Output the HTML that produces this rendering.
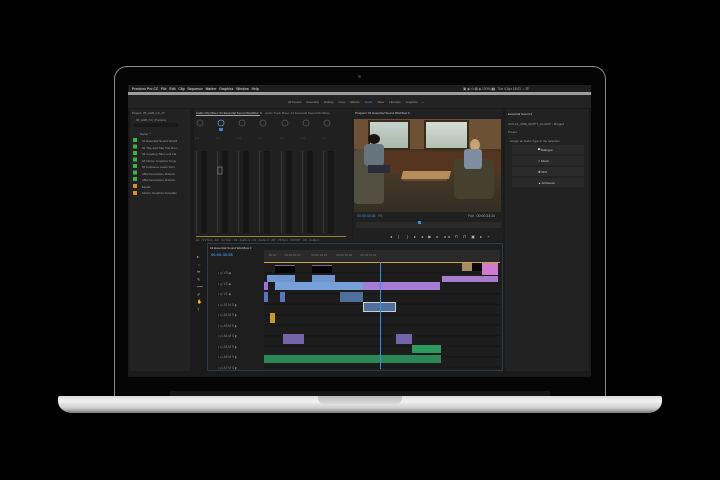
<!DOCTYPE html>
<html><head><meta charset="utf-8"><style>
*{margin:0;padding:0;box-sizing:border-box}
body{width:720px;height:480px;background:#000;position:relative;overflow:hidden;font-family:"Liberation Sans",sans-serif}
.a{position:absolute}
.t{position:absolute;font-size:3px;color:#9a9a9a;white-space:nowrap}
</style></head><body>
<!-- lid -->
<div class="a" style="left:114px;top:66px;width:492px;height:334px;border-radius:13px 13px 0 0;border:1.5px solid #8a8a8a;border-bottom:none;background:#050505"></div>
<div class="a" style="left:358px;top:75px;width:3px;height:3px;border-radius:50%;background:#333"></div>
<!-- screen -->
<div class="a" style="left:128px;top:85px;width:463px;height:292px;background:#1b1b1b;overflow:hidden">
 <div class="a" style="left:0;top:0;width:463px;height:7px;background:#1e1e1e"></div>
 <div class="t" style="left:4px;top:1.5px;color:#bbb;font-size:3.3px;font-weight:bold">  Premiere Pro CC &nbsp; File &nbsp; Edit &nbsp; Clip &nbsp; Sequence &nbsp; Marker &nbsp; Graphics &nbsp; Window &nbsp; Help</div>
 <div class="t" style="left:335px;top:1.5px;color:#aaa;font-size:3.3px">▣ ◉ ⊙ ▤ ◈ 100% ▮▮ &nbsp; Tue 4 Apr 18:01 &nbsp;⌕ ☰</div>
 <div class="a" style="left:0;top:7px;width:463px;height:3px;background:#9c9c9c"></div>
 <div class="a" style="left:0;top:10px;width:463px;height:13px;background:#232323"></div>
 <div class="t" style="left:160px;top:15px">All Panels &nbsp;&nbsp;&nbsp;&nbsp; Assembly &nbsp;&nbsp;&nbsp;&nbsp; Editing &nbsp;&nbsp;&nbsp;&nbsp; Color &nbsp;&nbsp;&nbsp;&nbsp; Effects &nbsp;&nbsp;&nbsp;&nbsp; <span style="color:#4a8fd8">Audio</span> &nbsp;&nbsp;&nbsp;&nbsp; Titles &nbsp;&nbsp;&nbsp;&nbsp; Libraries &nbsp;&nbsp;&nbsp;&nbsp; Graphics &nbsp;&nbsp;&nbsp; »</div>
 <!-- project panel -->
 <div class="a" style="left:2px;top:24px;width:60px;height:262px;background:#222"></div>
 <div class="t" style="left:4px;top:26px">Project: 05_AAB_CC_PI</div>
 <div class="t" style="left:8px;top:33px">05_AAB_CC_PI.prproj</div>
 <div class="a" style="left:6px;top:38px;width:44px;height:4px;background:#1a1a1a"></div>
 <div class="t" style="left:12px;top:47px">Name ⌃</div>
 <div class="a" style="left:5px;top:53px;width:4px;height:45px;background:repeating-linear-gradient(#3cb14a 0 4px,transparent 4px 6.5px)"></div>
 <div class="a" style="left:5px;top:99px;width:4px;height:4px;background:#e08a2c"></div>
 <div class="a" style="left:5px;top:105.5px;width:4px;height:4px;background:#e08a2c"></div>
 <div class="t" style="left:14px;top:53px;line-height:6.5px">01 Essential Sound Workfl<br>02 Title Add Title Title Rem<br>03 Creating Titles and Fla<br>04 Motion Graphics Temp<br>05 Ambience Audio Subt<br>ABA Restoration Rubrics<br>ABA Restoration Rubrics<br>Media<br>Motion Graphics Template</div>
 <!-- mixer -->
 <div class="a" style="left:66px;top:24px;width:158px;height:132px;background:#202020"></div>
 <div class="t" style="left:68px;top:26px;color:#ccc">Audio Clip Mixer: 01 Essential Sound Workflow &nbsp;≡ &nbsp;&nbsp; <span style="color:#888">Audio Track Mixer: 01 Essential Sound Workflow</span></div>
 <div class="a" style="left:68px;top:30px;width:64px;height:1px;background:#aaa"></div>
 <svg class="a" style="left:66px;top:30px" width="158" height="126">
  <g fill="none" stroke="#555" stroke-width="0.8">
   <circle cx="6" cy="8" r="3"/><circle cx="27" cy="8" r="3" stroke="#6a9bd8"/><circle cx="48" cy="8" r="3"/><circle cx="69" cy="8" r="3"/><circle cx="91" cy="8" r="3"/><circle cx="112" cy="8" r="3"/><circle cx="133" cy="8" r="3"/>
  </g>
  <rect x="25" y="13" width="4" height="3" fill="#4a7fc0"/>
  <g fill="#666" font-size="2.5" font-family="Liberation Sans">
   <text x="1" y="24">• • •</text><text x="22" y="24">• • •</text><text x="43" y="24">• • •</text><text x="64" y="24">• • •</text><text x="86" y="24">• • •</text><text x="107" y="24">• • •</text><text x="128" y="24">• • •</text>
  </g>
  <g fill="#3a3a3a">
   <rect x="2" y="36" width="1" height="82"/><rect x="23" y="36" width="1" height="82"/><rect x="44" y="36" width="1" height="82"/><rect x="65" y="36" width="1" height="82"/><rect x="87" y="36" width="1" height="82"/><rect x="108" y="36" width="1" height="82"/><rect x="129" y="36" width="1" height="82"/>
  </g>
  <g fill="#161616">
   <rect x="7" y="36" width="6" height="82"/><rect x="28" y="36" width="6" height="82"/><rect x="49" y="36" width="6" height="82"/><rect x="70" y="36" width="6" height="82"/><rect x="92" y="36" width="6" height="82"/><rect x="113" y="36" width="6" height="82"/><rect x="134" y="36" width="6" height="82"/>
  </g>
  <rect x="24" y="52" width="4" height="7" fill="none" stroke="#999" stroke-width="0.6"/>
  <rect x="2" y="121" width="150" height="0.8" fill="#b59a2a"/>
  <text x="2" y="126" font-size="3" fill="#777" font-family="Liberation Sans">A1 · V1 Text · A2 · V2 Text · A3 · Audio 3 · A4 · Audio 4 · A5 · V5 Text · FOOTP · A6 · Audio 6</text>
 </svg>
 <!-- program -->
 <div class="a" style="left:225px;top:24px;width:150px;height:132px;background:#202020"></div>
 <div class="t" style="left:227px;top:26px;color:#ccc">Program: 01 Essential Sound Workflow ≡</div>
 <div class="a" style="left:226px;top:34px;width:147px;height:93px;overflow:hidden;background:linear-gradient(#3b2a1c,#5a3b24 60%,#3a2a1e)">
  <div class="a" style="left:0;top:0;width:147px;height:30px;background:#6e5034"></div>
  <div class="a" style="left:14px;top:1px;width:42px;height:30px;background:linear-gradient(#c9d3cf,#a8b8a8);border:2px solid #3a2a1c"></div>
  <div class="a" style="left:70px;top:1px;width:45px;height:30px;background:linear-gradient(#d5ddd8,#b2c0b0);border:2px solid #3a2a1c"></div>
  <div class="a" style="left:0;top:33px;width:147px;height:24px;background:#55351f"></div>
  <div class="a" style="left:0;top:55px;width:147px;height:38px;background:linear-gradient(#44382a,#342e24)"></div>
  <div class="a" style="left:0;top:30px;width:30px;height:55px;background:#524e40;border-radius:4px"></div>
  <div class="a" style="left:14px;top:15px;width:12px;height:10px;border-radius:50%;background:#1a1410"></div>
  <div class="a" style="left:10px;top:25px;width:20px;height:22px;background:#66757c;border-radius:4px"></div>
  <div class="a" style="left:14px;top:46px;width:22px;height:8px;background:#2a2e3a"></div>
  <div class="a" style="left:48px;top:52px;width:48px;height:8px;background:#b58c5c;transform:skewX(-15deg)"></div>
  <div class="a" style="left:48px;top:60px;width:45px;height:2px;background:#6b4a2c"></div>
  <div class="a" style="left:100px;top:40px;width:40px;height:40px;background:#46402f;border-radius:5px"></div>
  <div class="a" style="left:116px;top:20px;width:10px;height:12px;border-radius:50%;background:#c7a470"></div>
  <div class="a" style="left:110px;top:30px;width:18px;height:20px;background:#7d8ea0;border-radius:3px"></div>
 </div>
 <div class="t" style="left:229px;top:129px;color:#3d8ce0;font-size:3.5px">00:00:33:06 &nbsp; <span style="color:#888">Fit</span></div>
 <div class="t" style="left:340px;top:129px;color:#aaa;font-size:3.5px">Full &nbsp; 00:00:33:10</div>
 <div class="a" style="left:228px;top:137px;width:145px;height:6px;background:#2b2b2b"></div>
 <div class="a" style="left:290px;top:136px;width:3px;height:3px;background:#3d8ce0"></div>
 <div class="t" style="left:262px;top:149px;color:#bbb;font-size:4px;letter-spacing:2px">◂ ❘ ❘ ▸ ◂ ▶ ▸ ◂◂ ⊓ ⊓ ▣ ▸ +</div>
 <!-- essential sound -->
 <div class="a" style="left:377px;top:24px;width:84px;height:262px;background:#222"></div>
 <div class="t" style="left:380px;top:27px;color:#ccc">Essential Sound ≡</div>
 <div class="t" style="left:380px;top:37px">AKS-01_CMB_INOP'T_AV-0007 - Merged</div>
 <div class="t" style="left:380px;top:45px">Preset</div>
 <div class="t" style="left:382px;top:54px">Assign an Audio Type to the selection</div>
 <div class="a" style="left:384px;top:60px;width:72px;height:9px;background:#2a2a2a"></div>
 <div class="a" style="left:384px;top:71px;width:72px;height:9px;background:#2a2a2a"></div>
 <div class="a" style="left:384px;top:82px;width:72px;height:9px;background:#2a2a2a"></div>
 <div class="a" style="left:384px;top:93px;width:72px;height:9px;background:#2a2a2a"></div>
 <div class="t" style="left:410px;top:63px;color:#ccc">▀ Dialogue</div>
 <div class="t" style="left:410px;top:74px;color:#ccc">♫ Music</div>
 <div class="t" style="left:410px;top:85px;color:#ccc">✱ SFX</div>
 <div class="t" style="left:410px;top:96px;color:#ccc">▲ Ambience</div>
 <!-- tools -->
 <div class="t" style="left:69px;top:168px;font-size:4px;line-height:7.5px;color:#aaa">▸<br>⇔<br>⇹<br>✎<br>⟷<br>✐<br>✋<br>T</div>
 <!-- timeline -->
 <div class="a" style="left:79px;top:158px;width:296px;height:128px;background:#1e1e1e;border:1px solid #2c3a4a"></div>
 <div class="t" style="left:82px;top:161px;color:#ccc">01 Essential Sound Workflow ≡</div>
 <div class="t" style="left:83px;top:167px;color:#3d8ce0;font-size:4px;font-weight:bold">00:00:33:06</div>
 <div class="a" style="left:136px;top:165px;width:236px;height:12px;background:#2a2a2a"></div>
 <div class="t" style="left:140px;top:168px;color:#777">:00:00 &nbsp;&nbsp;&nbsp;&nbsp;&nbsp;&nbsp;&nbsp;&nbsp; 00:00:16:23 &nbsp;&nbsp;&nbsp;&nbsp;&nbsp;&nbsp;&nbsp;&nbsp;&nbsp;&nbsp;&nbsp; 00:00:33:23 &nbsp;&nbsp;&nbsp;&nbsp;&nbsp;&nbsp;&nbsp;&nbsp;&nbsp; 00:00:50:22 &nbsp;&nbsp;&nbsp;&nbsp;&nbsp;&nbsp;&nbsp;&nbsp; 00:01:07:21</div>
 <div class="a" style="left:136px;top:177px;width:236px;height:1px;background:#c9a82a"></div>
 <div class="a" style="left:136px;top:178px;width:236px;height:106px;background:repeating-linear-gradient(#1d1d1d 0 9px,#181818 9px 10.5px)"></div>
 <div class="t" style="left:90px;top:183px;line-height:10.5px;color:#888;font-size:3.2px">▪ ◎ V3 ◉<br>▪ ◎ V2 ◉<br>▪ ◎ V1 ◉<br>▪ ◎ A1 M S ▮<br>▪ ◎ A2 M S ▮<br>▪ ◎ A3 M S ▮<br>▪ ◎ A4 M S ▮<br>▪ ◎ A5 M S ▮<br>▪ ◎ A6 M S ▮<br>▪ ◎ A7 M S ▮</div>
 <!-- clips -->
 <div class="a" style="left:147px;top:180px;width:20px;height:8px;background:#050505;border-top:1px solid #8b5aa8"></div>
 <div class="a" style="left:184px;top:180px;width:20px;height:8px;background:#050505;border-top:1px solid #8b5aa8"></div>
 <div class="a" style="left:334px;top:178px;width:10px;height:8px;background:#a68c66"></div>
 <div class="a" style="left:344px;top:178px;width:10px;height:8px;background:#080808"></div>
 <div class="a" style="left:354px;top:178px;width:16px;height:12px;background:#cf7cd0"></div>
 <div class="a" style="left:139px;top:190px;width:28px;height:7px;background:#7196cf"></div>
 <div class="a" style="left:184px;top:190px;width:23px;height:7px;background:#7196cf"></div>
 <div class="a" style="left:314px;top:191px;width:56px;height:6px;background:#a57dcc"></div>
 <div class="a" style="left:136px;top:197px;width:4px;height:8px;background:#9a74d6"></div>
 <div class="a" style="left:147px;top:197px;width:88px;height:8px;background:#76a0d8"></div>
 <div class="a" style="left:235px;top:197px;width:77px;height:8px;background:#a67dd6"></div>
 <div class="a" style="left:136px;top:207px;width:4px;height:10px;background:#5a78b8"></div>
 <div class="a" style="left:152px;top:207px;width:5px;height:10px;background:#5a78b8"></div>
 <div class="a" style="left:212px;top:207px;width:23px;height:10px;background:#4f6f9c"></div>
 <div class="a" style="left:235px;top:217px;width:33px;height:10px;background:#4f6f9c;border:1px solid #ccc"></div>
 <div class="a" style="left:142px;top:228px;width:5px;height:10px;background:#c79a30"></div>
 <div class="a" style="left:155px;top:249px;width:21px;height:10px;background:#7664a8"></div>
 <div class="a" style="left:268px;top:249px;width:16px;height:10px;background:#7664a8"></div>
 <div class="a" style="left:284px;top:260px;width:29px;height:8px;background:#2e9a5e"></div>
 <div class="a" style="left:136px;top:270px;width:177px;height:8px;background:#2b8756"></div>
 <div class="a" style="left:252px;top:177px;width:1px;height:107px;background:#3d8ce0"></div>
 <div class="a" style="left:0;top:287px;width:463px;height:5px;background:#1b1b1b"></div>
</div>
<div class="a" style="left:170px;top:391px;width:380px;height:6px;background:#151515"></div>
<!-- base -->
<div class="a" style="left:58px;top:396px;width:604px;height:17px;border-radius:2px 2px 14px 14px/2px 2px 12px 12px;background:linear-gradient(#d8d8d8,#f2f2f2 30%,#cfcfcf 70%,#7a7a7a)"></div>
<div class="a" style="left:318px;top:396px;width:84px;height:8px;border-radius:0 0 6px 6px;background:linear-gradient(#b8b8b8,#dcdcdc)"></div>
</body></html>
